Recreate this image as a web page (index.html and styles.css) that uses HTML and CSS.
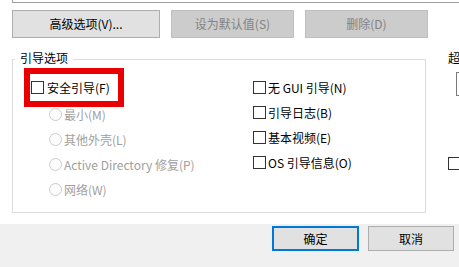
FILE: index.html
```html
<!DOCTYPE html>
<html lang="zh-CN">
<head>
<meta charset="utf-8">
<title>系统配置 - 引导</title>
<link rel="stylesheet" href="styles.css">
</head>
<body>
<div class="page">
  <div class="listbox"></div>
  <div class="btnrow">
    <button class="btn btn-wide">高级选项(V)...</button>
    <button class="btn btn-dis" disabled>设为默认值(S)</button>
    <button class="btn btn-dis" disabled>删除(D)</button>
  </div>
  <div class="main">
    <div class="group">
      <span class="legend">引导选项</span>
      <div class="cols">
        <div class="col">
          <div class="row row-first"><span class="chk"></span><span>安全引导(F)</span></div>
          <div class="row sub dis"><span class="radio"></span><span>最小(M)</span></div>
          <div class="row sub dis"><span class="radio"></span><span>其他外壳(L)</span></div>
          <div class="row sub dis"><span class="radio"></span><span>Active Directory 修复(P)</span></div>
          <div class="row sub dis"><span class="radio"></span><span>网络(W)</span></div>
        </div>
        <div class="col">
          <div class="row"><span class="chk"></span><span>无 GUI 引导(N)</span></div>
          <div class="row"><span class="chk"></span><span>引导日志(B)</span></div>
          <div class="row"><span class="chk"></span><span>基本视频(E)</span></div>
          <div class="row"><span class="chk"></span><span>OS 引导信息(O)</span></div>
        </div>
      </div>
      <div class="mark"></div>
    </div>
    <div class="side">
      <div class="side-label">超时(T):</div>
      <div class="side-input"></div>
      <span class="chk side-chk"></span>
    </div>
  </div>
</div>
<div class="footer">
  <button class="btn fbtn fbtn-default">确定</button>
  <button class="btn fbtn">取消</button>
</div>
</body>
</html>
```
FILE: styles.css
```css
* { box-sizing: border-box; }
html, body {
  margin: 0;
  padding: 0;
  width: 459px;
  height: 267px;
  overflow: hidden;
  background: #fff;
  font-family: "Noto Sans CJK SC", "Noto Sans", sans-serif;
  font-size: 12px;
  color: #000;
}
.page {
  height: 224px;
  background: #fff;
  overflow: hidden;
}
.listbox {
  margin-left: 12px;
  height: 3px;
  border-left: 1px solid #a0a0a0;
  border-bottom: 1px solid #a0a0a0;
}
.btnrow {
  display: flex;
  gap: 11px;
  margin-top: 7px;
  padding-left: 12px;
}
.btn {
  font-family: inherit;
  font-size: 12px;
  height: 28px;
  width: 123px;
  padding: 0;
  border: 1px solid #adadad;
  background: #e1e1e1;
  color: #000;
  line-height: 16px;
  flex: none;
}
.btn-wide { width: 148px; }
.btn-dis {
  background: #cccccc;
  border-color: #bfbfbf;
  color: #838383;
}
.main {
  display: flex;
  margin-top: 12px;
}
.group {
  position: relative;
  flex: none;
  margin-top: 9px;
  margin-left: 12px;
  width: 414px;
  height: 154px;
  border: 1px solid #dcdcdc;
}
.legend {
  position: absolute;
  top: -10px;
  left: 2px;
  padding: 0 5px;
  background: #fff;
  line-height: 16px;
}
.cols {
  display: grid;
  grid-template-columns: 222px auto;
  padding: 15px 0 0 18px;
}
.row {
  display: flex;
  align-items: center;
  height: 25px;
  gap: 2px;
  white-space: nowrap;
}
.row-first {
  height: 25px;
  margin-bottom: 2px;
  gap: 3px;
}
.sub { padding-left: 18px; }
.dis { color: #a0a0a0; }
.chk {
  display: inline-block;
  flex: none;
  width: 13px;
  height: 13px;
  border: 1px solid #333;
  background: #fff;
}
.radio {
  display: inline-block;
  flex: none;
  width: 13px;
  height: 13px;
  border: 1px solid #cccccc;
  border-radius: 50%;
  background: #fcfcfc;
}
.mark {
  position: absolute;
  left: 11px;
  top: 8px;
  width: 100px;
  height: 39px;
  border: 6px solid #ea0000;
}
.side {
  flex: none;
  margin-left: 22px;
  display: flex;
  flex-direction: column;
  align-items: flex-start;
  white-space: nowrap;
}
.side-label { line-height: 16px; }
.side-input {
  margin-top: 6px;
  margin-left: 8px;
  width: 60px;
  height: 24px;
  border: 1px solid #7a7a7a;
}
.side-chk { margin-top: 61px; }
.footer {
  height: 43px;
  background: #f0f0f0;
  display: flex;
  justify-content: flex-end;
  align-items: flex-start;
  gap: 9px;
  padding: 2px 5px 0 0;
}
.fbtn {
  width: 86px;
  height: 25px;
}
.fbtn-default {
  width: 87px;
  border: 2px solid #0078d7;
}
```
